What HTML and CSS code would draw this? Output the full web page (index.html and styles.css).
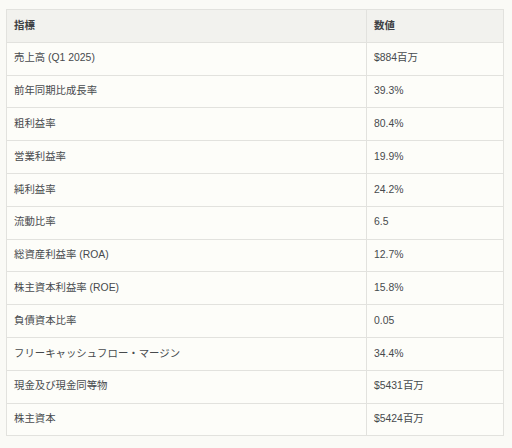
FILE: index.html
```html
<!DOCTYPE html>
<html lang="ja">
<head>
<meta charset="utf-8">
<link rel="stylesheet" href="styles.css">
</head>
<body>
<table class="metrics">
  <thead>
    <tr><th class="col-name">指標</th><th class="col-value">数値</th></tr>
  </thead>
  <tbody>
    <tr><td>売上高 (Q1 2025)</td><td>$884百万</td></tr>
    <tr><td>前年同期比成長率</td><td>39.3%</td></tr>
    <tr><td>粗利益率</td><td>80.4%</td></tr>
    <tr><td>営業利益率</td><td>19.9%</td></tr>
    <tr><td>純利益率</td><td>24.2%</td></tr>
    <tr><td>流動比率</td><td>6.5</td></tr>
    <tr><td>総資産利益率 (ROA)</td><td>12.7%</td></tr>
    <tr><td>株主資本利益率 (ROE)</td><td>15.8%</td></tr>
    <tr><td>負債資本比率</td><td>0.05</td></tr>
    <tr><td>フリーキャッシュフロー・マージン</td><td>34.4%</td></tr>
    <tr><td>現金及び現金同等物</td><td>$5431百万</td></tr>
    <tr><td>株主資本</td><td>$5424百万</td></tr>
  </tbody>
</table>
</body>
</html>
```
FILE: styles.css
```css
html, body {
  margin: 0;
  padding: 0;
  background: #fafaf6;
}
body {
  padding: 9px 8px 0 6px;
  font-family: "Liberation Sans", Arial, "Noto Sans CJK JP", sans-serif;
  font-size: 10.4px;
  color: #474a4d;
}
.metrics {
  width: 498px;
  border-collapse: collapse;
  background: #fdfdf9;
  border: 1px solid #e2e2de;
}
.metrics th,
.metrics td {
  border: 1px solid #e2e2de;
  text-align: left;
  padding: 0 7px;
  height: 31.8px;
  line-height: 1;
}
.metrics th {
  background: #f2f2ee;
  font-weight: 600;
  color: #3e4144;
}
.col-name { width: 345px; }
```
